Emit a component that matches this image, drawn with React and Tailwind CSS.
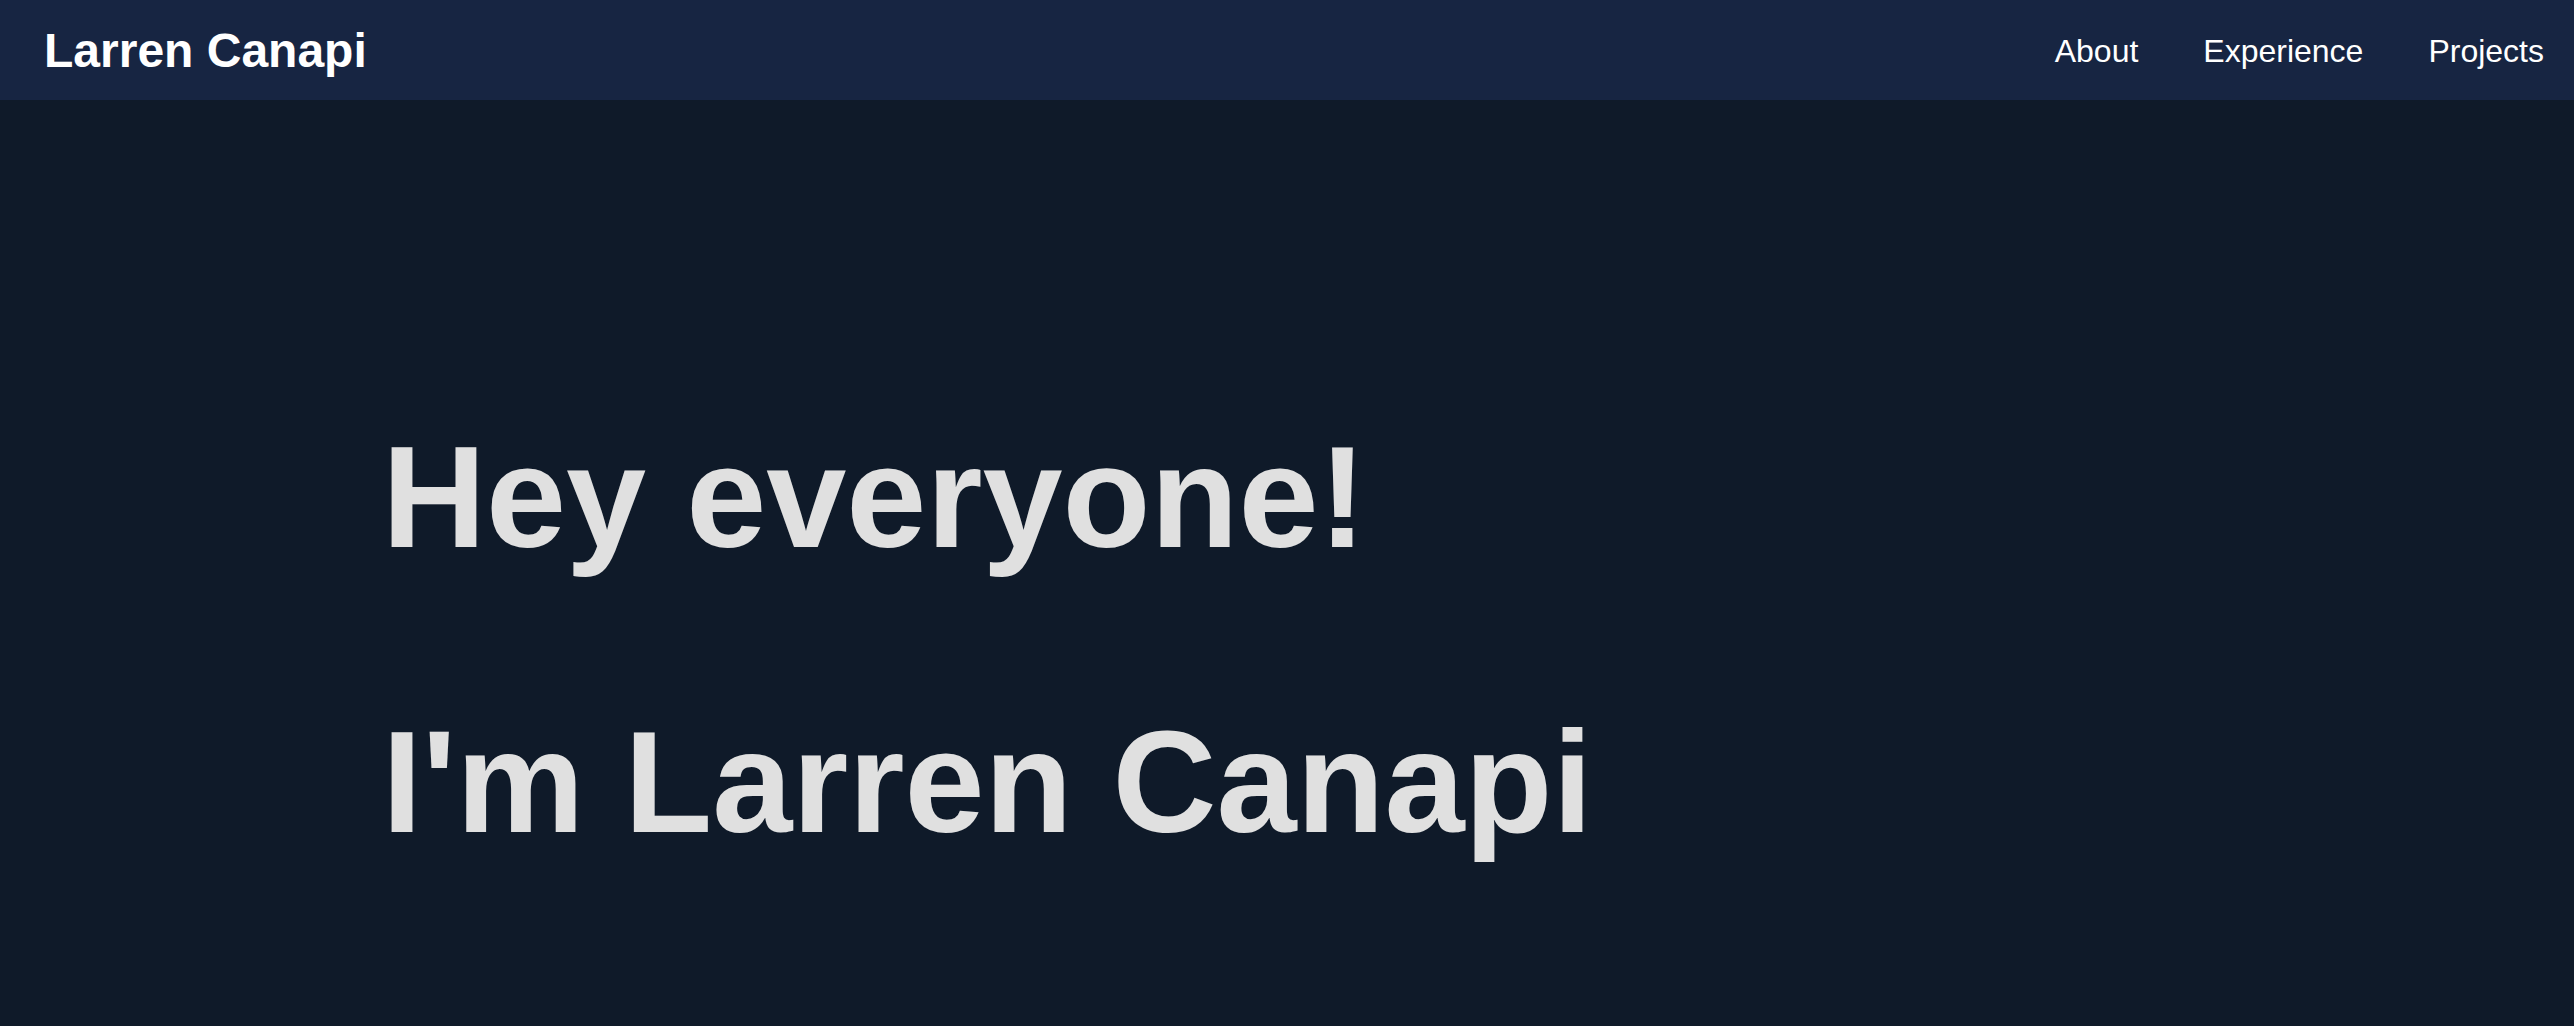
export default function App() {
  return (
    <div className="min-h-screen bg-[#0f1a29] font-['Liberation_Sans',Arial,sans-serif]">
      <header className="h-[100px] bg-[#172542] flex items-center justify-between pl-[44px] pr-[30px]">
        <div className="text-white font-bold text-[48px] leading-none pt-[2px]">Larren Canapi</div>
        <nav className="flex items-center gap-[65px] text-white text-[32px] leading-none pt-[2px]">
          <a href="#about">About</a>
          <a href="#experience">Experience</a>
          <a href="#projects">Projects</a>
        </nav>
      </header>
      <main className="flex flex-col pl-[382px] pt-[326px] gap-[141px] text-[#e0e0e0] font-bold text-[144px] leading-none">
        <h1>Hey everyone!</h1>
        <h1>I'm Larren Canapi</h1>
      </main>
    </div>
  );
}
